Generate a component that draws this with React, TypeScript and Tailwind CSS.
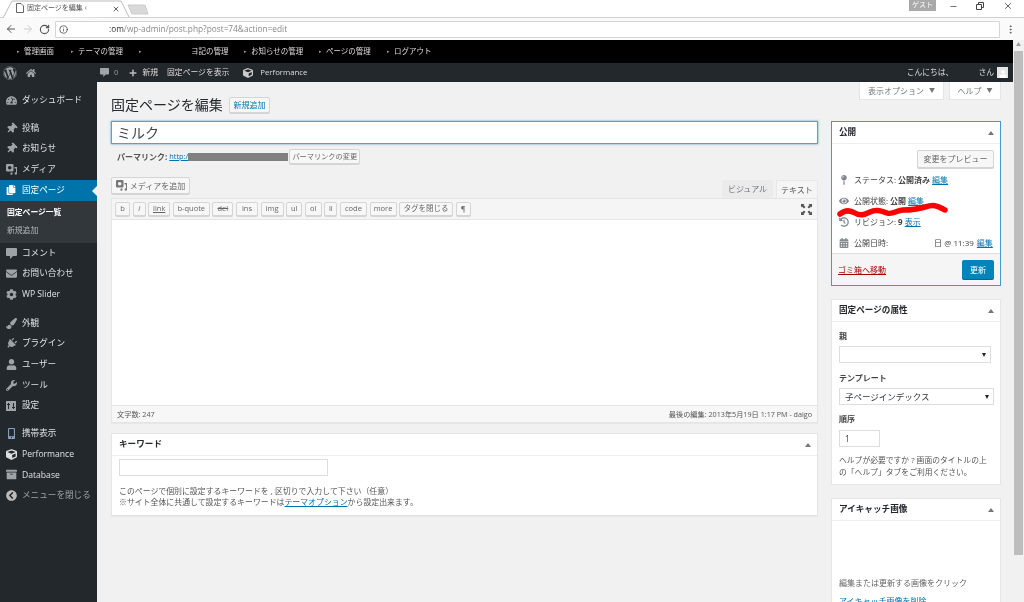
import { ArrowLeft, ArrowRight, Info, Minus, MoreVertical, RotateCw, X } from "lucide-react";
import type { ReactNode } from "react";
import {
  FaArchive,
  FaCalendarAlt,
  FaChevronCircleLeft,
  FaCog,
  FaCopy,
  FaCube,
  FaEnvelope,
  FaEye,
  FaHistory,
  FaHome,
  FaMapPin,
  FaMobileAlt,
  FaPaintBrush,
  FaPlug,
  FaPlus,
  FaTachometerAlt,
  FaThumbtack,
  FaUser,
  FaWordpress,
  FaWrench,
} from "react-icons/fa";

const blackMenu = [
  { label: "管理画面", w: "w-[54px]" },
  { label: "テーマの管理", w: "w-[68px]" },
  { label: "", w: "w-[52px]" },
  { label: "ヨ記の管理", w: "w-[53px]" },
  { label: "お知らせの管理", w: "w-[75px]" },
  { label: "ページの管理", w: "w-[68px]" },
  { label: "ログアウト", w: "w-[70px]" },
];

const editorButtons = [
  { label: "b", cls: "w-[15px] font-bold" },
  { label: "i", cls: "w-[13px] italic" },
  { label: "link", cls: "w-[22px] underline" },
  { label: "b-quote", cls: "w-[37px]" },
  { label: "del", cls: "w-[21px] line-through" },
  { label: "ins", cls: "w-[22px]" },
  { label: "img", cls: "w-[23px]" },
  { label: "ul", cls: "w-[16px]" },
  { label: "ol", cls: "w-[17px]" },
  { label: "li", cls: "w-[13px]" },
  { label: "code", cls: "w-[27px]" },
  { label: "more", cls: "w-[27px]" },
  { label: "タグを閉じる", cls: "w-[54px]" },
  { label: "¶", cls: "w-[15px] font-bold" },
];

function MediaIcon() {
  return (
    <svg width="11" height="11" viewBox="0 0 11 11" fill="currentColor">
      <path fillRule="evenodd" d="M1 0h5.500a1 1 0 0 1 1 1v5.500a1 1 0 0 1-1 1H1a1 1 0 0 1-1-1V1a1 1 0 0 1 1-1zm2.700 2a1.800 1.800 0 1 0 0 3.600 1.800 1.800 0 0 0 0-3.600z" />
      <path d="M8.500 3H11v6.500a1.200 1.200 0 1 1-1-1.200V4.500H8.500zM4 8.500h2.500v1.200a1.100 1.100 0 1 1-1-1.100H4z" />
    </svg>
  );
}

function BubbleIcon({ size = 11 }: { size?: number }) {
  return (
    <svg width={size} height={size} viewBox="0 0 11 11" fill="currentColor">
      <path d="M1 0h9a1 1 0 0 1 1 1v6a1 1 0 0 1-1 1H7l-3 3V8H1a1 1 0 0 1-1-1V1a1 1 0 0 1 1-1z" />
    </svg>
  );
}

function SettingsIcon() {
  return (
    <svg width="10" height="10" viewBox="0 0 10 10" fill="currentColor">
      <path fillRule="evenodd" d="M0 0h10v10H0zM2 2v1H1v1h1v4h1V4h1V3H3V2zm5 0v4H6v1h1v1h1V7h1V6H8V2z" />
    </svg>
  );
}

function MenuItem({ icon, label, dim }: { icon: ReactNode; label: string; dim?: boolean }) {
  return (
    <div className={`flex h-[20.7px] items-center whitespace-nowrap pl-[6px] text-[8.6px] ${dim ? "text-[#9ea3a8]" : "text-[#dfe1e3]"}`}>
      <span className="flex w-[16px] justify-start text-[11px] text-[#9ea3a8]">{icon}</span>
      <span>{label}</span>
    </div>
  );
}

function Sidebar() {
  return (
    <aside className="flex w-[97px] shrink-0 flex-col bg-[#23282d] pt-[8px]">
      <MenuItem icon={<FaTachometerAlt />} label="ダッシュボード" />
      <div className="h-[7px]" />
      <MenuItem icon={<FaThumbtack className="rotate-45" />} label="投稿" />
      <MenuItem icon={<FaThumbtack className="rotate-45" />} label="お知らせ" />
      <MenuItem icon={<MediaIcon />} label="メディア" />
      <div className="relative flex h-[21px] items-center bg-[#0073aa] pl-[6px] text-[8.6px] text-white">
        <span className="flex w-[16px] text-[10px]">
          <FaCopy />
        </span>
        固定ページ
        <span className="absolute right-0 top-[6px] h-0 w-0 border-y-[5px] border-r-[5px] border-y-transparent border-r-[#f1f1f1]" />
      </div>
      <div className="flex h-[42px] flex-col justify-center gap-[6px] bg-[#32373c] pl-[7px] text-[7.8px]">
        <span className="font-bold text-white">固定ページ一覧</span>
        <span className="text-[#b4b9be]">新規追加</span>
      </div>
      <MenuItem icon={<BubbleIcon />} label="コメント" />
      <MenuItem icon={<FaEnvelope />} label="お問い合わせ" />
      <MenuItem icon={<FaCog />} label="WP Slider" />
      <div className="h-[8px]" />
      <MenuItem icon={<FaPaintBrush />} label="外観" />
      <MenuItem icon={<FaPlug className="rotate-45" />} label="プラグイン" />
      <MenuItem icon={<FaUser />} label="ユーザー" />
      <MenuItem icon={<FaWrench />} label="ツール" />
      <MenuItem icon={<SettingsIcon />} label="設定" />
      <div className="h-[7px]" />
      <MenuItem icon={<FaMobileAlt className="text-[#8aa4c4]" />} label="携帯表示" />
      <MenuItem icon={<FaCube className="text-[#ddd]" />} label="Performance" />
      <MenuItem icon={<FaArchive />} label="Database" />
      <MenuItem icon={<FaChevronCircleLeft className="text-[#bbb]" />} label="メニューを閉じる" dim />
    </aside>
  );
}

function Btn({ children, cls = "" }: { children: ReactNode; cls?: string }) {
  return (
    <div className={`flex items-center justify-center whitespace-nowrap rounded-[2px] border border-[#d5d5d5] bg-[#f7f7f7] text-[#666] shadow-[0_1px_0_#d5d5d5] ${cls}`}>
      {children}
    </div>
  );
}

function CardHead({ title }: { title: string }) {
  return (
    <div className="flex h-[22px] items-center justify-between border-b border-[#eee] pl-[7px] pr-[6px] text-[8.6px] font-bold text-[#23282d]">
      {title}
      <span className="h-0 w-0 border-x-[3px] border-b-[4px] border-x-transparent border-b-[#72777c]" />
    </div>
  );
}

function PublishRow({ icon, children }: { icon: ReactNode; children: ReactNode }) {
  return (
    <div className="flex h-[21px] items-center whitespace-nowrap text-[8px] text-[#444]">
      <span className="flex w-[15px] text-[10px] text-[#82878c]">{icon}</span>
      {children}
    </div>
  );
}

function Select({ value, cls }: { value?: string; cls: string }) {
  return (
    <div className={`flex h-[17px] items-center justify-between border border-[#ddd] bg-white pl-[5px] pr-[4px] text-[8.5px] text-[#32373c] ${cls}`}>
      {value}
      <span className="ml-auto h-0 w-0 border-x-[2.5px] border-t-[4px] border-x-transparent border-t-[#222]" />
    </div>
  );
}

const A = "text-[#0073aa] underline";

export default function App() {
  return (
    <div
      className="flex h-[602px] w-[1024px] flex-col overflow-hidden bg-white blur-[0.3px]"
      style={{ fontFamily: '"Open Sans", "Noto Sans CJK JP", sans-serif' }}
    >
      {/* browser tabs */}
      <div className="relative flex h-[18px] shrink-0 items-end border-b border-[#d0d0d0] bg-white">
        <svg width="150" height="18" className="absolute left-0 top-0" viewBox="0 0 150 18" fill="none">
          <path d="M3 18 L12 1 H121 L129 17" stroke="#bbb" fill="#fff" />
          <path d="M128 5 H145 L148 14 H132 Z" fill="#d9d9d9" stroke="#ccc" />
        </svg>
        <div className="relative flex h-[18px] w-[122px] items-center whitespace-nowrap pl-[16px] text-[7px] text-[#555]">
          <svg width="8" height="10" viewBox="0 0 8 10" fill="none" stroke="#666" className="mr-[3px]">
            <path d="M.5.5H5L7.5 3V9.500H.5Z" />
          </svg>
          固定ページを編集 ‹
          <X size={8} className="absolute left-[112px] top-[6px] text-[#444]" strokeWidth={2.5} />
        </div>
        <div className="ml-auto flex h-[18px] items-start">
          <div className="flex h-[12px] w-[27px] items-center justify-center bg-[#a9a9a9] text-[7px] text-white">ゲスト</div>
          <div className="flex w-[88px] items-center justify-around pl-[4px] pr-[2px] pt-[2px] text-[#444]">
            <Minus size={9} />
            <svg width="8" height="8" viewBox="0 0 8 8" fill="none" stroke="#444">
              <path d="M.5 2.500h5v5h-5zM2.500 2.500v-2h5v5h-2" />
            </svg>
            <X size={10} />
          </div>
        </div>
      </div>
      {/* browser address row */}
      <div className="flex h-[22px] shrink-0 items-center bg-[#fafafa] pl-[5px] text-[#555]">
        <ArrowLeft size={12} />
        <ArrowRight size={12} className="ml-[5px] text-[#ccc]" />
        <RotateCw size={11} className="ml-[5px]" strokeWidth={2.5} />
        <div className="ml-[5px] flex h-[17px] w-[945px] items-center rounded-[1px] border border-[#d5d5d5] bg-white pl-[3px] text-[8.3px] text-[#888]">
          <Info size={9} className="text-[#444]" />
          <span className="ml-[41px]">
            <span className="text-[#333]">:om</span>/wp-admin/post.php?post=74&amp;action=edit
          </span>
        </div>
        <MoreVertical size={11} className="ml-[5px]" />
      </div>
      <div className="flex min-h-0 flex-1">
        <div className="flex w-[1013px] shrink-0 flex-col">
          {/* site menu */}
          <div className="flex h-[23px] shrink-0 items-center bg-black pl-[17px] text-[7.5px] text-[#ddd]">
            {blackMenu.map((m, i) => (
              <div key={i} className={`flex items-center whitespace-nowrap ${m.w}`}>
                <span className={`mr-[4px] text-[5px] text-[#999] ${i === 3 ? "hidden" : ""}`}>▸</span>
                {m.label}
              </div>
            ))}
          </div>
          {/* admin bar */}
          <div className="flex h-[19px] shrink-0 items-center justify-between bg-[#23282d] pl-[3px] pr-[5px] text-[7.8px] text-[#ddd]">
            <div className="flex items-center">
              <FaWordpress className="text-[14px] text-[#a0a5aa]" />
              <FaHome className="ml-[9px] text-[10px] text-[#a0a5aa]" />
              <span className="ml-[64px] text-[#a0a5aa]">
                <BubbleIcon size={9} />
              </span>
              <span className="ml-[5px] text-[#999]">0</span>
              <FaPlus className="ml-[11px] text-[8px] text-[#bbb]" />
              <span className="ml-[5px]">新規</span>
              <span className="ml-[9px]">固定ページを表示</span>
              <FaCube className="ml-[14px] text-[10px] text-[#ccc]" />
              <span className="ml-[7px]">Performance</span>
            </div>
            <div className="flex items-center">
              <span>こんにちは、</span>
              <span className="ml-[25px]">さん</span>
              <span className="ml-[3px] flex h-[11px] w-[11px] items-end justify-center bg-[#e5e5e5]">
                <FaUser className="text-[8px] text-white" />
              </span>
            </div>
          </div>
          <div className="flex min-h-0 flex-1">
            <Sidebar />
            {/* content */}
            <main className="relative min-w-0 flex-1 bg-[#f1f1f1] pl-[14px] pr-[12px] text-[#444]">
              <div className="flex h-[18px] justify-end gap-[5px] text-[8px] text-[#72777c]">
                <div className="flex w-[85px] items-center justify-center gap-[5px] border border-t-0 border-[#e5e5e5] bg-white">
                  表示オプション <span className="text-[6px]">▼</span>
                </div>
                <div className="flex w-[52px] items-center justify-center gap-[5px] border border-t-0 border-[#e5e5e5] bg-white">
                  ヘルプ <span className="text-[6px]">▼</span>
                </div>
              </div>
              <div className="-mt-[4px] flex h-[17px] items-center">
                <h1 className="w-[118px] whitespace-nowrap text-[14px] text-[#23282d]">固定ページを編集</h1>
                <Btn cls="h-[16px] w-[41px] text-[8px] !text-[#0073aa]">新規追加</Btn>
              </div>
              <div className="mt-[8px] flex gap-[13px]">
                {/* post body */}
                <div className="flex w-[707px] shrink-0 flex-col">
                  <div className="flex h-[23px] items-center border border-[#5b9dd9] bg-white pl-[5px] text-[14px] text-[#444] shadow-[0_0_2px_rgba(30,140,190,.8)]">
                    ミルク
                  </div>
                  <div className="mt-[4px] flex h-[17px] items-center whitespace-nowrap pl-[6px] text-[8px] text-[#555]">
                    <span className="font-bold">パーマリンク:</span>
                    <span className="ml-[2px] text-[7.4px] text-[#0073aa] underline">http:/</span>
                    <span className="h-[8px] w-[100px] bg-[#808080]" />
                    <Btn cls="ml-[1px] h-[15px] w-[71px] text-[7.2px]">パーマリンクの変更</Btn>
                  </div>
                  <div className="mt-[12px] flex h-[21px] items-start justify-between">
                    <Btn cls="h-[17px] w-[79px] gap-[3px] text-[8px]">
                      <span className="text-[#777]">
                        <MediaIcon />
                      </span>
                      メディアを追加
                    </Btn>
                    <div className="mt-[3px] flex items-end whitespace-nowrap text-[8px] text-[#72777c]">
                      <div className="flex h-[18px] w-[51px] items-center justify-center bg-[#ebebeb]">ビジュアル</div>
                      <div className="ml-[3px] flex h-[18px] w-[42px] items-center justify-center border border-b-0 border-[#e8e8e8] bg-[#f5f5f5] text-[#555]">
                        テキスト
                      </div>
                    </div>
                  </div>
                  <div className="border border-[#e5e5e5] bg-white shadow-[0_1px_1px_rgba(0,0,0,.04)]">
                    <div className="flex h-[21px] items-center justify-between border-b border-[#e5e5e5] bg-[#f5f5f5] pl-[3px] pr-[5px]">
                      <div className="flex gap-[2.6px]">
                        {editorButtons.map((b) => (
                          <Btn key={b.label} cls={`h-[14px] text-[7.5px] font-normal ${b.cls}`}>
                            {b.label}
                          </Btn>
                        ))}
                      </div>
                      <svg width="11" height="11" viewBox="0 0 11 11" fill="#555">
                        <path d="M0 0h3.500L2.500 1 4.500 3 3 4.500 1 2.500 0 3.500zM11 0v3.500L10 2.500 8 4.500 6.500 3 8.500 1 7.500 0zM0 11V7.500l1 1L3 6.500 4.500 8 2.500 10 3.500 11zM11 11H7.500l1-1L6.500 8 8 6.500l2 2 1-1z" />
                      </svg>
                    </div>
                    <div className="h-[185px] bg-white" />
                    <div className="flex h-[17px] items-center justify-between border-t border-[#e5e5e5] bg-[#f7f7f7] px-[5px] text-[7.2px] text-[#555]">
                      <span>文字数: 247</span>
                      <span>最後の編集: 2013年5月19日 1:17 PM - daigo</span>
                    </div>
                  </div>
                  <div className="mt-[10px] h-[83px] border border-[#e5e5e5] bg-white shadow-[0_1px_1px_rgba(0,0,0,.04)]">
                    <CardHead title="キーワード" />
                    <div className="ml-[7px] mt-[3px] h-[17px] w-[209px] border border-[#ddd]" />
                    <p className="ml-[7px] mt-[10px] text-[7.9px] leading-[11px] text-[#555]">
                      このページで個別に設定するキーワードを , 区切りで入力して下さい（任意）
                      <br />
                      ※サイト全体に共通して設定するキーワードは<span className={A}>テーマオプション</span>から設定出来ます。
                    </p>
                  </div>
                </div>
                {/* side column */}
                <div className="flex w-[170px] shrink-0 flex-col">
                  <div className="relative h-[165px] border border-[#3f9bcf] bg-white">
                    <CardHead title="公開" />
                    <div className="flex justify-end pr-[6px] pt-[6px]">
                      <Btn cls="h-[18px] w-[77px] text-[8px]">変更をプレビュー</Btn>
                    </div>
                    <div className="mt-[1.5px] pl-[7px]">
                      <PublishRow icon={<FaMapPin />}>
                        ステータス:<b className="ml-[2px]">公開済み</b>
                        <span className={`ml-[2px] ${A}`}>編集</span>
                      </PublishRow>
                      <PublishRow icon={<FaEye />}>
                        公開状態:<b className="ml-[2px]">公開</b>
                        <span className={`ml-[2px] ${A}`}>編集</span>
                      </PublishRow>
                      <PublishRow icon={<FaHistory />}>
                        リビジョン:<b className="ml-[2px]">9</b>
                        <span className={`ml-[2px] ${A}`}>表示</span>
                      </PublishRow>
                      <PublishRow icon={<FaCalendarAlt />}>
                        公開日時:
                        <b className="ml-[46px] font-normal">日 @ 11:39</b>
                        <span className={`ml-[3px] ${A}`}>編集</span>
                      </PublishRow>
                    </div>
                    <div className="absolute inset-x-0 bottom-0 flex h-[32px] items-center justify-between border-t border-[#ddd] bg-[#f5f5f5] pl-[6px] pr-[6px]">
                      <span className="text-[8px] text-[#a00] underline">ゴミ箱へ移動</span>
                      <div className="flex h-[19px] w-[32px] items-center justify-center rounded-[2px] bg-[#0085ba] text-[8px] text-white shadow-[0_1px_0_#006799]">
                        更新
                      </div>
                    </div>
                    {/* redaction scribble */}
                    <svg className="absolute left-[5px] top-[79px]" width="115" height="20" viewBox="0 0 115 20" fill="none">
                      <path
                        d="M3 13 C8 9 13 9 18 12 S27 14 33 11 S44 10 50 12 S60 9 66 9 S78 9 88 6 S100 5 108 9"
                        stroke="#f00"
                        strokeWidth="5.5"
                        strokeLinecap="round"
                        strokeLinejoin="round"
                      />
                    </svg>
                  </div>
                  <div className="mt-[13px] h-[186px] border border-[#e5e5e5] bg-white">
                    <CardHead title="固定ページの属性" />
                    <div className="px-[7px] text-[8px] leading-[12px] text-[#444]">
                      <div className="mt-[8px] font-bold">親</div>
                      <Select cls="mt-[4px] w-[152px]" />
                      <div className="mt-[9px] font-bold">テンプレート</div>
                      <Select value="子ページインデックス" cls="mt-[4px] w-[155px]" />
                      <div className="mt-[8px] font-bold">順序</div>
                      <div className="mt-[5px] flex h-[17px] w-[41px] items-center border border-[#ddd] pl-[5px] text-[8.5px]">1</div>
                      <p className="mt-[7px] whitespace-nowrap text-[7.8px] leading-[12px] text-[#555]">
                        ヘルプが必要ですか ? 画面のタイトルの上
                        <br />
                        の「ヘルプ」タブをご利用ください。
                      </p>
                    </div>
                  </div>
                  <div className="mt-[13px] h-[110px] border border-[#e5e5e5] bg-white">
                    <CardHead title="アイキャッチ画像" />
                    <div className="mt-[56px] pl-[7px] text-[8px] text-[#666]">編集または更新する画像をクリック</div>
                    <div className={`mt-[6px] pl-[7px] text-[8px] ${A}`}>アイキャッチ画像を削除</div>
                  </div>
                </div>
              </div>
            </main>
          </div>
        </div>
        {/* page scrollbar */}
        <div className="flex w-[11px] shrink-0 flex-col bg-[#f1f1f1]">
          <div className="flex h-[10px] items-center justify-center text-[5px] text-[#999]">▲</div>
          <div className="ml-[1px] mt-[1px] h-[504px] w-[9px] bg-[#bdbdbd]" />
        </div>
      </div>
    </div>
  );
}
